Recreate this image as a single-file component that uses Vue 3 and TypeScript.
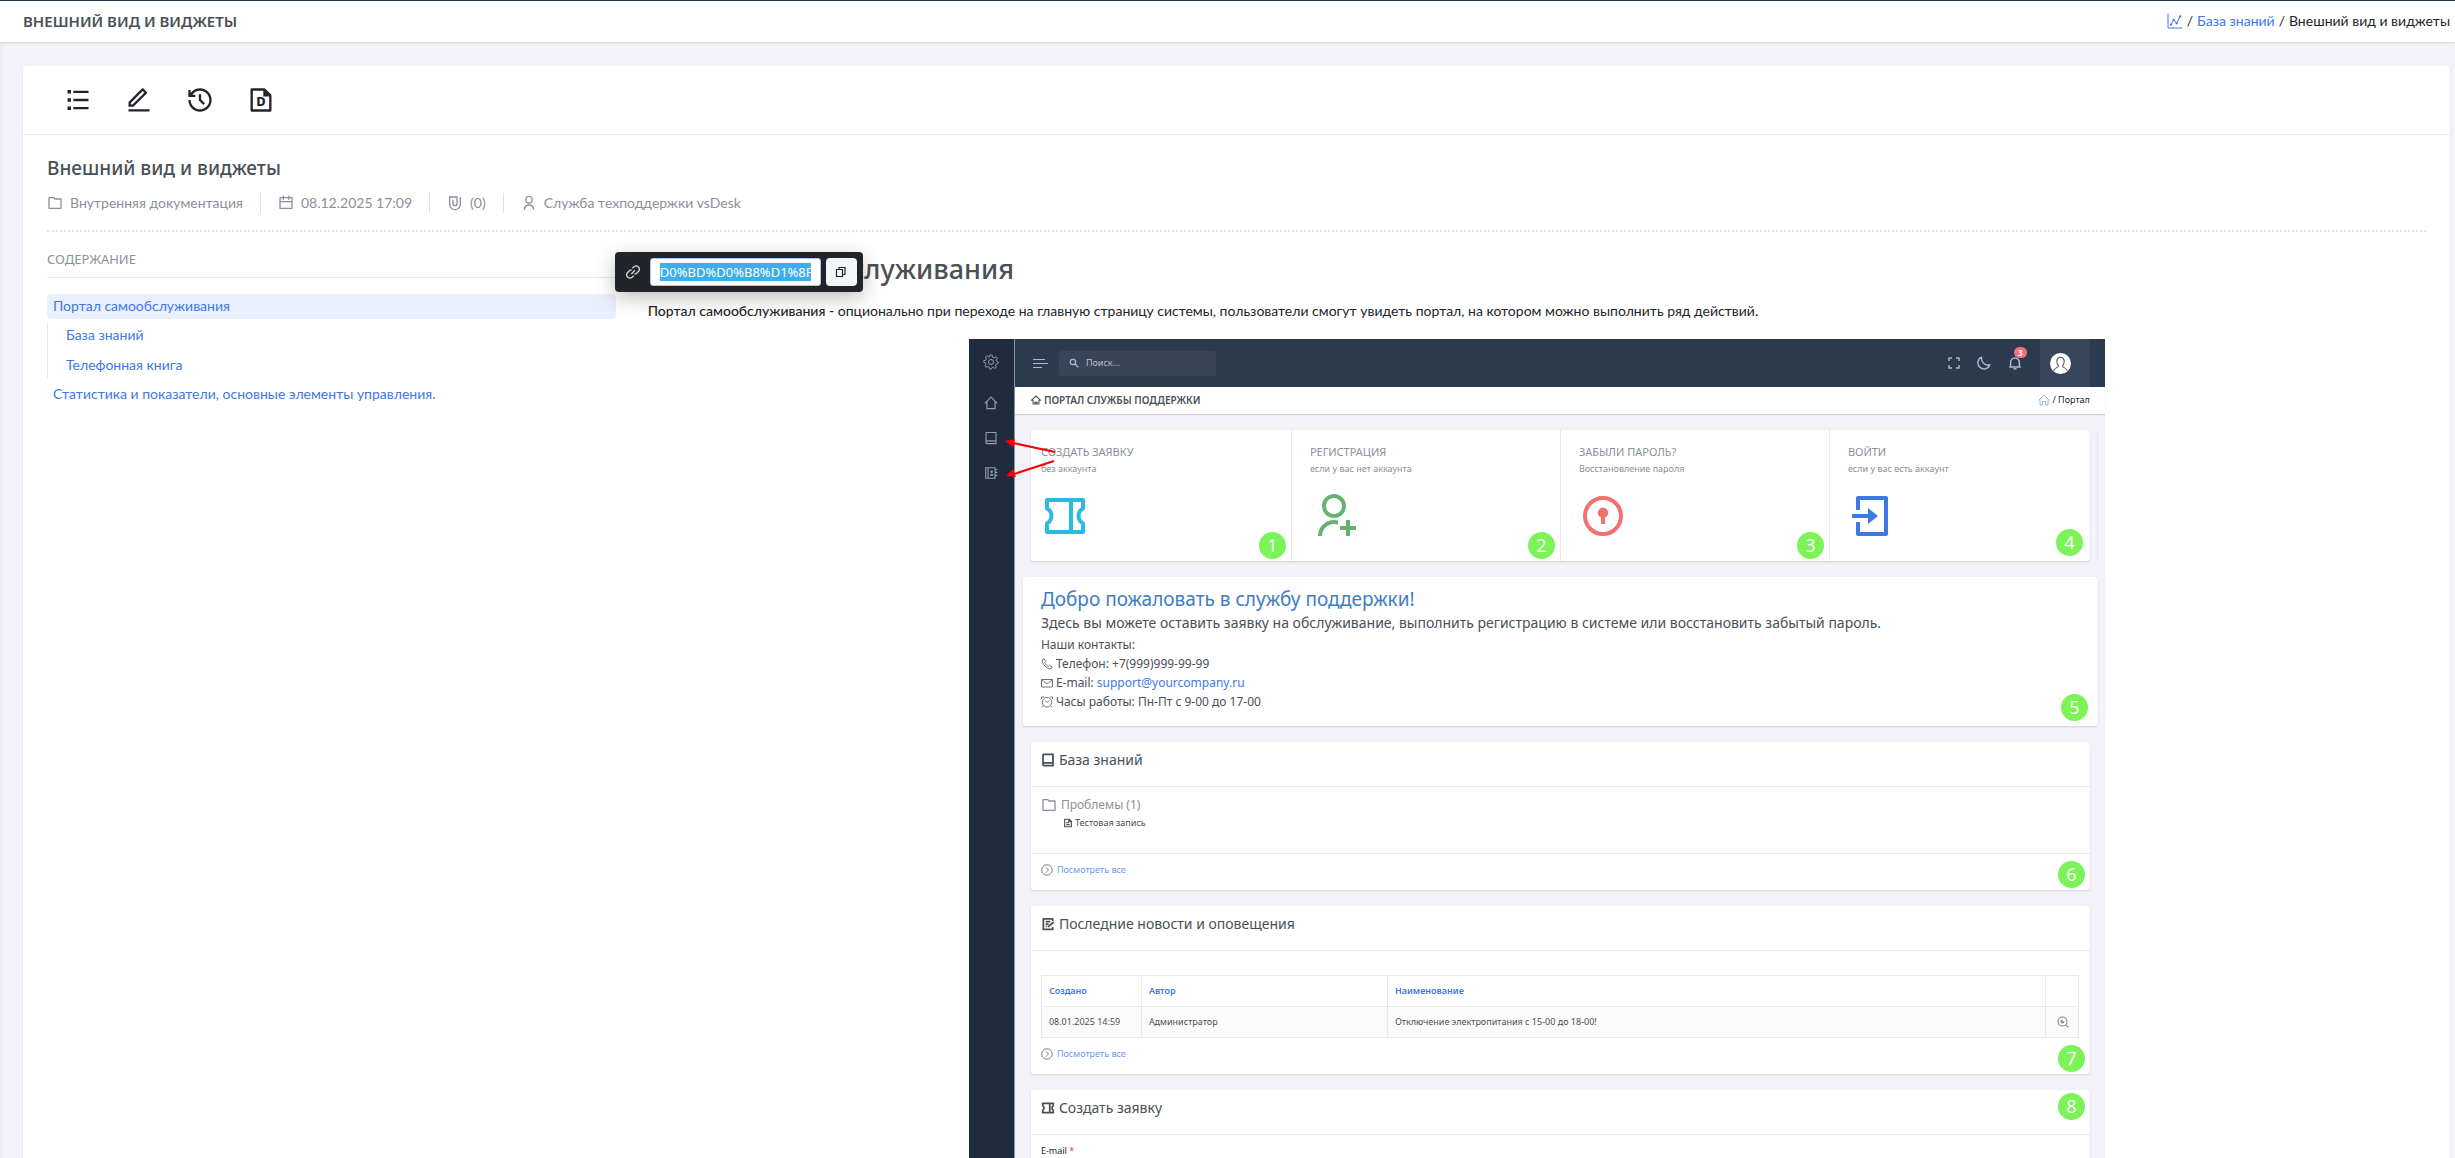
<script setup lang="ts">
interface TocItem {
  text: string
  children?: string[]
  active?: boolean
}

interface Tile {
  title: string
  note: string
  icon: string
  tone: string
}

const toolbar = [
  { icon: 'list', label: 'Список' },
  { icon: 'edit', label: 'Редактировать' },
  { icon: 'history', label: 'История' },
]

const meta = [
  { icon: 'folder', text: 'Внутренняя документация' },
  { icon: 'calendar', text: '08.12.2025 17:09' },
  { icon: 'clip', text: '(0)' },
  { icon: 'user', text: 'Служба техподдержки vsDesk' },
]

const toc: TocItem[] = [
  {
    text: 'Портал самообслуживания',
    active: true,
    children: ['База знаний', 'Телефонная книга'],
  },
  { text: 'Статистика и показатели, основные элементы управления.' },
]

const tiles: Tile[] = [
  { title: 'СОЗДАТЬ ЗАЯВКУ', note: 'без аккаунта', icon: 'ticket', tone: 'cyan' },
  { title: 'РЕГИСТРАЦИЯ', note: 'если у вас нет аккаунта', icon: 'user-add', tone: 'green' },
  { title: 'ЗАБЫЛИ ПАРОЛЬ?', note: 'Восстановление пароля', icon: 'keyhole', tone: 'red' },
  { title: 'ВОЙТИ', note: 'если у вас есть аккаунт', icon: 'login', tone: 'blue' },
]
</script>

<template>
  <div class="page">
    <svg class="defs" aria-hidden="true">
      <symbol id="list" viewBox="0 0 24 24"><path d="M8 4H21V6H8V4ZM3 3.5H6V6.5H3V3.5ZM3 10.5H6V13.5H3V10.5ZM3 17.5H6V20.5H3V17.5ZM8 11H21V13H8V11ZM8 18H21V20H8V18Z" /></symbol>
      <symbol id="edit" viewBox="0 0 24 24"><path d="M6.414 15.89L16.556 5.748L15.142 4.334L5 14.476V15.89H6.414ZM7.243 17.89H3V13.647L14.435 2.212C14.826 1.822 15.459 1.822 15.849 2.212L18.678 5.041C19.068 5.431 19.068 6.064 18.678 6.455L7.243 17.89ZM3 19.89H21V21.89H3V19.89Z" /></symbol>
      <symbol id="history" viewBox="0 0 24 24"><path d="M12 2C17.523 2 22 6.477 22 12C22 17.523 17.523 22 12 22C6.477 22 2 17.523 2 12H4C4 16.418 7.582 20 12 20C16.418 20 20 16.418 20 12C20 7.582 16.418 4 12 4C9.25 4 6.824 5.387 5.385 7.5H8V9.5H2V3.5H4V6C5.824 3.571 8.729 2 12 2ZM13 7V11.585L16.243 14.828L14.828 16.243L11 12.413V7H13Z" /></symbol>
      <symbol id="folder" viewBox="0 0 24 24"><path d="M4 5V19H20V7H11.586L9.586 5H4ZM12.414 5H21C21.552 5 22 5.448 22 6V20C22 20.552 21.552 21 21 21H3C2.448 21 2 20.552 2 20V4C2 3.448 2.448 3 3 3H10.414L12.414 5Z" /></symbol>
      <symbol id="calendar" viewBox="0 0 24 24"><path d="M9 1V3H15V1H17V3H21C21.552 3 22 3.448 22 4V20C22 20.552 21.552 21 21 21H3C2.448 21 2 20.552 2 20V4C2 3.448 2.448 3 3 3H7V1H9ZM20 11H4V19H20V11ZM7 5H4V9H20V5H17V7H15V5H9V7H7V5Z" /></symbol>
      <symbol id="clip" viewBox="0 0 24 24"><path d="M20 3V14A8 8 0 0 1 4 14V3H15V13A3 3 0 0 1 9 13V7" fill="none" stroke="currentColor" stroke-width="2" /></symbol>
      <symbol id="user" viewBox="0 0 24 24"><path d="M4 22C4 17.582 7.582 14 12 14C16.418 14 20 17.582 20 22H18C18 18.686 15.314 16 12 16C8.686 16 6 18.686 6 22H4ZM12 13C8.685 13 6 10.315 6 7C6 3.685 8.685 1 12 1C15.315 1 18 3.685 18 7C18 10.315 15.315 13 12 13ZM12 11C14.21 11 16 9.21 16 7C16 4.79 14.21 3 12 3C9.79 3 8 4.79 8 7C8 9.21 9.79 11 12 11Z" /></symbol>
      <symbol id="user-add" viewBox="0 0 24 24"><path d="M14 14.252V16.341C13.374 16.12 12.701 16 12 16C8.686 16 6 18.686 6 22H4C4 17.582 7.582 14 12 14C12.691 14 13.361 14.088 14 14.252ZM12 13C8.685 13 6 10.315 6 7C6 3.685 8.685 1 12 1C15.315 1 18 3.685 18 7C18 10.315 15.315 13 12 13ZM12 11C14.21 11 16 9.21 16 7C16 4.79 14.21 3 12 3C9.79 3 8 4.79 8 7C8 9.21 9.79 11 12 11ZM18 17V14H20V17H23V19H20V22H18V19H15V17H18Z" /></symbol>
      <symbol id="ticket" viewBox="0 0 24 24"><path d="M3 4H21V8.300A4.200 4.200 0 0 0 21 15.700V20H3V15.700A4.200 4.200 0 0 0 3 8.300ZM15 4V20" fill="none" stroke="currentColor" stroke-linejoin="round" /></symbol>
      <symbol id="keyhole" viewBox="0 0 24 24"><circle cx="12" cy="12" r="9" fill="none" stroke="currentColor" stroke-width="2" /><path d="M13 12.800V16H11V12.800A2.600 2.600 0 1 1 13 12.800Z" /></symbol>
      <symbol id="login" viewBox="0 0 24 24"><path d="M4 15H6V20H18V4H6V9H4V3C4 2.448 4.448 2 5 2H19C19.552 2 20 2.448 20 3V21C20 21.552 19.552 22 19 22H5C4.448 22 4 21.552 4 21V15ZM10 11V8L15 12L10 16V13H2V11H10Z" /></symbol>
      <symbol id="chart" viewBox="0 0 24 24"><path d="M1.500 1V22.500H23M6 18L10 10L14.500 16L20 4" fill="none" stroke="currentColor" stroke-width="1.500" /><circle cx="6" cy="17.500" r="1.700" /><circle cx="10" cy="10.500" r="1.700" /><circle cx="14.500" cy="15.500" r="1.700" /><circle cx="20" cy="5" r="1.700" /></symbol>
      <symbol id="link" viewBox="0 0 24 24"><path d="M9.500 15L15 9.500M11 6.500L13.500 4A5 5 0 0 1 20.500 11L17.500 14A5 5 0 0 1 14 15.300M13 17.500L10.500 20A5 5 0 0 1 3.500 13L6.500 10A5 5 0 0 1 10 8.700" fill="none" stroke="currentColor" stroke-width="2" /></symbol>
      <symbol id="copy" viewBox="0 0 24 24"><path d="M3 7H15V21H3ZM8 6V3H20V17H16" fill="none" stroke="currentColor" stroke-width="2.400" /></symbol>
      <symbol id="gear" viewBox="0 0 24 24"><circle cx="12" cy="12" r="3.800" fill="none" stroke="currentColor" stroke-width="1.500" /><path d="M10.300 1.500H13.700L14.300 4.700L16.600 5.700L19.400 3.900L21.700 6.500L19.700 9.200L20.400 11L23 12L22.500 14.500L19.700 15L18.800 17.300L20.300 19.800L17.700 21.500L15.500 19.700L13.500 20.300L12.500 22.800L10 22.500L9.300 19.700L7.200 18.700L4.600 20.100L2.700 17.700L4.400 15.500L3.700 13.400L1.200 12.400V10L4.100 9.300L5 7.200L3.600 4.700L6.100 2.800L8.400 4.500L9.700 4.300Z" fill="none" stroke="currentColor" stroke-width="1.500" stroke-linejoin="round" /></symbol>
      <symbol id="home" viewBox="0 0 24 24"><path d="M1.500 12.500L12 2L22.500 12.500M5 10V21.500H19V10" fill="none" stroke="currentColor" stroke-width="2" /></symbol>
      <symbol id="home-solid" viewBox="0 0 24 24"><path d="M1.500 12.500L12 2.500L22.500 12.500H19V21.500H5V12.500Z" fill="none" stroke="currentColor" stroke-width="2.500" /><path d="M8 16H16V21H8Z" /></symbol>
      <symbol id="home-thin" viewBox="0 0 24 24"><path d="M1 13L12 2L23 13M4 11V22H9V15H15V22H20V11" fill="none" stroke="currentColor" stroke-width="1.800" /></symbol>
      <symbol id="book" viewBox="0 0 24 24"><path d="M4 2.500H20.500V21.500H5A1.500 1.500 0 0 1 3.500 20V3.500A1 1 0 0 1 4 2.500ZM3.500 19A2 2 0 0 1 5.500 17H20.500" fill="none" stroke="currentColor" /></symbol>
      <symbol id="contacts" viewBox="0 0 24 24"><path d="M3 3H19V21H3ZM7 3V21M20 6H23M20 11H23M20 16H23" fill="none" stroke="currentColor" stroke-width="2" /><path d="M10 16.500A3.200 3.200 0 0 1 16.400 16.500Z" /><circle cx="13.200" cy="10" r="2.200" /></symbol>
      <symbol id="search" viewBox="0 0 24 24"><circle cx="9.500" cy="9.500" r="6.500" fill="none" stroke="currentColor" stroke-width="3" /><path d="M14 14L22 22" stroke="currentColor" stroke-width="3.500" /></symbol>
      <symbol id="full" viewBox="0 0 24 24"><path d="M2 8V2H8M16 2H22V8M22 16V22H16M8 22H2V16" fill="none" stroke="currentColor" stroke-width="2.800" /></symbol>
      <symbol id="moon" viewBox="0 0 24 24"><path d="M8 2A11 11 0 0 0 22 15A10.500 10.500 0 1 1 8 2Z" fill="none" stroke="currentColor" stroke-width="2.500" stroke-linejoin="round" /></symbol>
      <symbol id="bell" viewBox="0 0 24 24"><path d="M2 19H22M4.500 19V11A7.500 7.500 0 0 1 19.500 11V19M9.500 22H14.500" fill="none" stroke="currentColor" stroke-width="2.600" /></symbol>
      <symbol id="phone" viewBox="0 0 24 24"><path d="M6 1.500L2.500 4C1.500 12 12 22.500 20 21.500L22.500 18L17 14.500L14.500 16.500C12 15.500 8.500 12 7.500 9.500L9.500 7Z" fill="none" stroke="currentColor" stroke-width="1.600" /></symbol>
      <symbol id="mail" viewBox="0 0 24 24"><path d="M1 5H23V20H1ZM2 6L12 14L22 6" fill="none" stroke="currentColor" stroke-width="1.600" /></symbol>
      <symbol id="clock" viewBox="0 0 24 24"><circle cx="12" cy="12.500" r="9.500" fill="none" stroke="currentColor" stroke-width="1.500" /><path d="M8 9L12 13L16 9M1 6V2H6M18 2H23V6M4 20L2 23M20 20L22 23" fill="none" stroke="currentColor" stroke-width="1.500" /></symbol>
      <symbol id="file" viewBox="0 0 24 24"><path d="M4 3H15L20 8V21H4ZM8 11H14M8 16H16M14 3V9H20" fill="none" stroke="currentColor" stroke-width="2.800" /></symbol>
      <symbol id="next" viewBox="0 0 24 24"><circle cx="12" cy="12" r="10.500" fill="none" stroke="currentColor" stroke-width="1.800" /><path d="M9.500 6.500L15 12L9.500 17.500" fill="none" stroke="currentColor" stroke-width="1.800" /></symbol>
      <symbol id="news" viewBox="0 0 24 24"><path d="M20 7V3H4V21H20V17M8 8H16M8 12H13M8 16H10M12 17L22 8.500" fill="none" stroke="currentColor" stroke-width="3" /></symbol>
      <symbol id="zoom" viewBox="0 0 24 24"><circle cx="11" cy="11" r="9" fill="none" stroke="currentColor" stroke-width="2.200" /><path d="M11 7V11H15A4 4 0 1 1 11 7Z" /><path d="M17.500 17.500L22.500 22.500" stroke="currentColor" stroke-width="2.200" /></symbol>
    </svg>

    <header class="page-head">
      <h1>ВНЕШНИЙ ВИД И ВИДЖЕТЫ</h1>
      <nav class="crumbs" aria-label="Навигация">
        <a href="#" aria-label="Главная"><svg class="i16"><use href="#chart" /></svg></a>
        <span>/</span>
        <a href="#">База знаний</a>
        <span>/</span>
        <span>Внешний вид и виджеты</span>
      </nav>
    </header>

    <main class="card">
      <div class="toolbar">
        <button v-for="t in toolbar" :key="t.icon" type="button" :aria-label="t.label">
          <svg class="i28"><use :href="'#' + t.icon" /></svg>
        </button>
        <button type="button" aria-label="Экспорт">
          <svg class="i28" viewBox="0 0 24 24">
            <path d="M4 3H15L20 8V21H4Z" fill="none" stroke="currentColor" stroke-width="2" stroke-linejoin="round" />
            <path d="M14 3V9H20Z" />
            <text x="8" y="17" font-size="11" font-weight="800">D</text>
          </svg>
        </button>
      </div>

      <div class="body">
        <h2>Внешний вид и виджеты</h2>
        <ul class="meta">
          <li v-for="m in meta" :key="m.icon"><svg class="i16"><use :href="'#' + m.icon" /></svg>{{ m.text }}</li>
        </ul>

        <div class="columns">
          <aside>
            <h3>СОДЕРЖАНИЕ</h3>
            <ul class="toc">
              <li v-for="item in toc" :key="item.text">
                <a href="#" :class="{ active: item.active }">{{ item.text }}</a>
                <ul v-if="item.children">
                  <li v-for="c in item.children" :key="c"><a href="#">{{ c }}</a></li>
                </ul>
              </li>
            </ul>
          </aside>

          <article>
            <h2 class="title">Портал самообслуживания</h2>
            <div class="popup">
              <svg class="i16"><use href="#link" /></svg>
              <input type="text" aria-label="Ссылка" value="D0%BD%D0%B8%D1%8F" readonly />
              <button type="button" aria-label="Копировать"><svg class="i12"><use href="#copy" /></svg></button>
            </div>
            <p class="lead"><b>Портал самообслуживания - </b>опционально при переходе на главную страницу системы, пользователи смогут увидеть портал, на котором можно выполнить ряд действий.</p>

            <div class="portal">
              <nav class="rail" aria-label="Меню портала">
                <a href="#" aria-label="Настройки"><svg class="i16"><use href="#gear" /></svg></a>
                <a href="#" aria-label="Главная"><svg class="i14"><use href="#home" /></svg></a>
                <a href="#" aria-label="База знаний"><svg class="i14"><use href="#book" /></svg></a>
                <a href="#" aria-label="Контакты"><svg class="i14"><use href="#contacts" /></svg></a>
              </nav>

              <div class="main">
                <div class="top">
                  <button class="burger" type="button" aria-label="Меню"><i></i><i></i><i></i></button>
                  <label class="search">
                    <svg class="i10"><use href="#search" /></svg>
                    <input type="text" placeholder="Поиск..." aria-label="Поиск" />
                  </label>
                  <div class="actions">
                    <button type="button" aria-label="Во весь экран"><svg class="i12"><use href="#full" /></svg></button>
                    <button type="button" aria-label="Тема"><svg class="i14"><use href="#moon" /></svg></button>
                    <button type="button" aria-label="Уведомления" class="bell"><svg class="i14"><use href="#bell" /></svg><em>3</em></button>
                  </div>
                  <div class="profile">
                    <svg viewBox="0 0 20 20"><circle cx="10" cy="10" r="10" fill="#fff" /><path d="M3.500 17C4 14 8 14 8 12.500C5.500 9 6 4 10 4S14.500 9 12 12.500C12 14 16 14 16.500 17" fill="none" stroke="#555" stroke-width="1" /></svg>
                  </div>
                </div>

                <div class="sub">
                  <span class="name"><svg class="i10"><use href="#home-solid" /></svg>ПОРТАЛ СЛУЖБЫ ПОДДЕРЖКИ</span>
                  <span class="where"><a href="#" aria-label="Главная"><svg class="i12"><use href="#home-thin" /></svg></a>/ Портал</span>
                </div>

                <div class="stack">
                  <section class="tiles">
                    <div v-for="(t, n) in tiles" :key="t.icon" class="tile">
                      <strong>{{ t.title }}</strong>
                      <small>{{ t.note }}</small>
                      <svg class="i48" :class="t.tone"><use :href="'#' + t.icon" /></svg>
                      <span class="num">{{ n + 1 }}</span>
                    </div>
                  </section>

                  <section class="welcome">
                    <h2>Добро пожаловать в службу поддержки!</h2>
                    <h3>Здесь вы можете оставить заявку на обслуживание, выполнить регистрацию в системе или восстановить забытый пароль.</h3>
                    <p>Наши контакты:</p>
                    <p><svg class="i12"><use href="#phone" /></svg>Телефон: +7(999)999-99-99</p>
                    <p><svg class="i12"><use href="#mail" /></svg>E-mail: <a href="#">support@yourcompany.ru</a></p>
                    <p><svg class="i12"><use href="#clock" /></svg>Часы работы: Пн-Пт с 9-00 до 17-00</p>
                    <span class="num">5</span>
                  </section>

                  <section class="panel">
                    <h3><svg class="i14"><use href="#book" /></svg>База знаний</h3>
                    <div class="kb">
                      <div class="group"><svg class="i16"><use href="#folder" /></svg>Проблемы (1)</div>
                      <div class="entry"><svg class="i10"><use href="#file" /></svg>Тестовая запись</div>
                    </div>
                    <div class="more line"><svg class="i12"><use href="#next" /></svg><a href="#">Посмотреть все</a></div>
                    <span class="num">6</span>
                  </section>

                  <section class="panel">
                    <h3><svg class="i14"><use href="#news" /></svg>Последние новости и оповещения</h3>
                    <table>
                      <thead>
                        <tr><th class="c-date">Создано</th><th class="c-author">Автор</th><th>Наименование</th><th class="c-act"></th></tr>
                      </thead>
                      <tbody>
                        <tr>
                          <td>08.01.2025 14:59</td><td>Администратор</td><td>Отключение электропитания с 15-00 до 18-00!</td>
                          <td class="c-act"><svg class="i12"><use href="#zoom" /></svg></td>
                        </tr>
                      </tbody>
                    </table>
                    <div class="more"><svg class="i12"><use href="#next" /></svg><a href="#">Посмотреть все</a></div>
                    <span class="num">7</span>
                  </section>

                  <section class="panel">
                    <h3><svg class="i14"><use href="#ticket" /></svg>Создать заявку</h3>
                    <div class="form">E-mail <em>*</em></div>
                    <span class="num high">8</span>
                  </section>
                </div>
              </div>

              <svg class="arrows" viewBox="0 0 60 50" aria-hidden="true">
                <path d="M54 17L12 8M53 26L13 39" stroke="#fe0000" stroke-width="2" />
                <path d="M4 6L14 4L12 12ZM5 41L12 34L15 42Z" fill="#fe0000" />
              </svg>
            </div>
          </article>
        </div>
      </div>
    </main>
  </div>
</template>

<style>
html,
body {
  margin: 0;
  background: #f3f2f9;
}
</style>

<style scoped>
.page {
  --blue: #3d78e3;
  --line: #e9e9ec;
  --ink: #495057;
  --muted: #8a909d;
  --ui: "Noto Sans", sans-serif;
  height: 100vh;
  overflow: hidden;
  box-sizing: border-box;
  display: flex;
  flex-direction: column;
  border-top: 1px solid #2b384c;
  background: linear-gradient(90deg, #ebeaf1, #f3f2f9 4px);
  color: #212529;
  font: 14px/20px Lato, "Noto Sans", sans-serif;
}
.page *,
.page *::before {
  box-sizing: border-box;
}
.defs {
  position: absolute;
  width: 0;
  height: 0;
}
h1, h2, h3, p, ul {
  margin: 0;
  padding: 0;
  font-weight: 400;
}
h1, h2, h3, text {
  font-family: var(--ui);
}
ul {
  list-style: none;
}
a {
  color: var(--blue);
  text-decoration: none;
}
button {
  padding: 0;
  border: 0;
  background: none;
  color: inherit;
  font: inherit;
}
svg {
  flex: none;
  display: block;
  fill: currentColor;
  stroke-width: 2;
}
.i10 { width: 10px; height: 10px; }
.i12 { width: 12px; height: 12px; }
.i14 { width: 14px; height: 14px; }
.i16 { width: 16px; height: 16px; }
.i28 { width: 28px; height: 28px; }
.i48 { width: 48px; height: 48px; }

.page-head {
  flex: none;
  display: flex;
  align-items: center;
  justify-content: space-between;
  height: 41px;
  padding: 0 5px 2px 23px;
  background: #fff;
  box-shadow: 0 1px 2px rgba(56, 65, 74, 0.2);
}
.page-head h1 {
  color: var(--ink);
  font-size: 15px;
  font-weight: 600;
}
.crumbs {
  display: flex;
  align-items: center;
  gap: 4px;
}
.card {
  flex: 1 0 auto;
  margin: 24px 5px 0 23px;
  border-radius: 4px;
  background: #fff;
  box-shadow: 0 1px 2px rgba(56, 65, 74, 0.15);
}
.toolbar {
  display: flex;
  gap: 33px;
  padding: 20px 41px;
  border-bottom: 1px solid var(--line);
}
.body {
  padding: 23px 24px 24px;
}
.body > h2 {
  color: var(--ink);
  font-size: 19px;
  font-weight: 500;
  line-height: 20px;
}
.meta {
  display: flex;
  align-items: center;
  margin-top: 15px;
  padding-bottom: 17px;
  border-bottom: 2px dotted #e0e1e5;
  color: var(--muted);
}
.meta li {
  display: flex;
  align-items: center;
  gap: 7px;
}
.meta li + li {
  margin-left: 17px;
  padding-left: 17px;
  border-left: 1px solid #e0e1e5;
}
.columns {
  display: grid;
  grid-template-columns: calc(25% - 26px) minmax(0, 1fr);
  gap: 32px;
}
aside h3 {
  padding: 17px 0 8px;
  border-bottom: 1px solid var(--line);
  color: var(--muted);
  font-size: 13px;
  line-height: 20px;
}
.toc {
  margin-top: 16px;
}
.toc a {
  display: block;
  padding: 2px 6px 3px;
  border-radius: 4px;
}
.toc a.active {
  background: #e9effc;
}
.toc ul {
  display: grid;
  gap: 5px;
  margin: 4px 0;
  padding-left: 12px;
  border-left: 1px solid var(--line);
}
article {
  position: relative;
}
.title {
  padding-top: 19px;
  color: var(--ink);
  font-size: 27px;
  font-weight: 500;
  line-height: 36px;
}
.popup {
  position: absolute;
  top: 20px;
  left: -33px;
  display: flex;
  align-items: center;
  width: 248px;
  height: 40px;
  padding: 0 6px 0 10px;
  border-radius: 4px;
  background: #212529;
  box-shadow: 0 6px 20px rgba(0, 0, 0, 0.25);
  color: #d5d8db;
}
.popup input {
  flex: 1;
  min-width: 0;
  height: 28px;
  margin: 0 5px 0 9px;
  padding: 4px 9px;
  border: 1px solid #a9c1f3;
  border-radius: 3px;
  background: linear-gradient(#3daee9, #3daee9) content-box, #fff;
  color: #fff;
  font: 13px/18px var(--ui);
}
.popup button {
  display: grid;
  place-items: center;
  width: 31px;
  height: 28px;
  border-radius: 4px;
  background: #f3f6f9;
  color: #212529;
}
.lead {
  margin: 14px 0 18px;
}
.lead b {
  font-weight: 500;
}

.portal {
  position: relative;
  display: flex;
  max-width: 1136px;
  margin: 0 auto;
  background: #f3f2f9;
  font: 10px/14px var(--ui);
}
.rail {
  flex: none;
  display: flex;
  flex-direction: column;
  align-items: center;
  gap: 21px;
  width: 46px;
  padding-top: 15px;
  border-right: 1px solid #8d949e;
  background: #202c3d;
}
.rail a {
  color: #929ba6;
}
.rail a:first-child {
  margin-bottom: 5px;
}
.main {
  flex: 1;
  min-width: 0;
}
.top {
  display: flex;
  align-items: center;
  height: 48px;
  padding: 0 15px 0 18px;
  background: #2c3a4d;
  color: #a5bcd2;
}
.burger {
  display: grid;
  gap: 3px;
}
.burger i {
  width: 12px;
  height: 1px;
  background: currentColor;
}
.burger i:nth-child(2) { width: 15px; }
.burger i:nth-child(3) { width: 9px; }
.search {
  display: flex;
  align-items: center;
  gap: 7px;
  width: 157px;
  height: 25px;
  margin-left: 11px;
  padding-left: 10px;
  border-radius: 3px;
  background: #384559;
}
.search input {
  width: 100px;
  padding: 0;
  border: 0;
  background: none;
  color: inherit;
  font: 9px/14px var(--ui);
}
.search input::placeholder {
  color: #b3c1d0;
}
.actions {
  display: flex;
  align-items: center;
  gap: 17px;
  margin: 0 18px 0 auto;
}
.bell {
  position: relative;
}
.bell em {
  position: absolute;
  top: -9px;
  left: 6px;
  width: 13px;
  height: 11px;
  border-radius: 6px;
  background: #f1707a;
  color: #fff;
  font: 700 8px/11px var(--ui);
  text-align: center;
}
.profile {
  display: flex;
  align-items: center;
  width: 50px;
  height: 48px;
  padding-left: 10px;
  background: #38465b;
}
.profile svg {
  width: 21px;
  height: 21px;
}
.sub {
  display: flex;
  align-items: center;
  justify-content: space-between;
  height: 27px;
  padding: 0 15px 2px 16px;
  background: #fff;
  box-shadow: 0 1px 1px rgba(56, 65, 74, 0.2);
}
.name,
.where {
  display: flex;
  align-items: center;
  gap: 3px;
}
.name {
  color: var(--ink);
  font-weight: 600;
}
.where {
  gap: 2px;
  font-size: 9px;
}
.where a {
  color: #8ba8ee;
}
.stack {
  display: flex;
  flex-direction: column;
  gap: 16px;
  padding: 16px 15px 0 16px;
}
.tiles,
.welcome,
.panel {
  position: relative;
  border-radius: 3px;
  background: #fff;
  box-shadow: 0 1px 2px rgba(56, 65, 74, 0.2);
}
.tiles {
  display: grid;
  grid-template-columns: 260px 1fr 1fr 261px;
  height: 131px;
}
.tiles::after {
  content: "";
  position: absolute;
  right: -8px;
  width: 1px;
  height: 100%;
  background: #e6e6ee;
}
.tile {
  position: relative;
  padding: 15px 18px 0;
  border-left: 1px solid var(--line);
  color: var(--muted);
}
.tile:first-child {
  padding-left: 10px;
  border-left: 0;
}
.tile strong,
.tile small {
  display: block;
  font-size: 11px;
  font-weight: 400;
}
.tile small {
  margin-top: 3px;
  font-size: 9px;
}
.tile svg {
  margin-top: 16px;
}
.cyan { color: #2bbbe0; }
.green { color: #67b173; }
.red { color: #f17171; }
.blue { color: #3d78e3; }
.num {
  position: absolute;
  right: 5px;
  bottom: 2px;
  width: 27px;
  height: 27px;
  border-radius: 50%;
  background: #7cf358;
  color: #fff;
  font: 18px/27px "Open Sans", sans-serif;
  text-align: center;
}
.tile:last-child .num,
.welcome .num {
  right: 7px;
  bottom: 5px;
}
.welcome .num {
  right: 10px;
}
.panel .num.high {
  top: 3px;
  bottom: auto;
}
.welcome {
  margin: 0 -8px;
  padding: 10px 18px 15px;
  color: var(--ink);
  font-size: 12px;
  line-height: 19px;
}
.welcome h2 {
  color: #417cc4;
  font-size: 19px;
  line-height: 24px;
}
.welcome h3 {
  font-size: 14px;
  line-height: 24px;
}
.welcome p {
  display: flex;
  align-items: center;
  gap: 3px;
}
.panel > h3 {
  display: flex;
  align-items: center;
  gap: 4px;
  height: 45px;
  padding: 0 10px 9px;
  border-bottom: 1px solid var(--line);
  color: var(--ink);
  font-size: 14px;
}
.panel > h3 svg {
  stroke-width: 3;
}
.kb {
  height: 66px;
  padding: 10px;
}
.group,
.entry,
.more {
  display: flex;
  align-items: center;
}
.group {
  gap: 4px;
  height: 16px;
  color: var(--muted);
  font-size: 12px;
}
.entry {
  gap: 2px;
  height: 20px;
  padding-left: 22px;
  color: var(--ink);
  font-size: 9px;
}
.more {
  gap: 4px;
  height: 36px;
  padding: 0 10px 4px;
  color: #6c757d;
}
.more.line {
  height: 37px;
  border-top: 1px solid var(--line);
}
.more a {
  color: #6d98e9;
  font-size: 9px;
}
table {
  width: calc(100% - 21px);
  margin: 24px 11px 0 10px;
  border-collapse: collapse;
  color: var(--ink);
  font-size: 9px;
}
th,
td {
  height: 31px;
  padding: 0 7px;
  border: 1px solid var(--line);
  text-align: left;
}
th {
  color: var(--blue);
  font-weight: 600;
}
td {
  background: #fbfbfb;
}
.c-date { width: 100px; }
.c-author { width: 246px; }
.c-act {
  width: 33px;
  padding-left: 11px;
  color: #7d8797;
}
.form {
  padding: 9px 10px 24px;
  font-size: 9px;
}
.form em {
  color: #f33;
  font-style: normal;
}
.arrows {
  position: absolute;
  top: 96px;
  left: 32px;
  width: 60px;
  height: 50px;
}
</style>
